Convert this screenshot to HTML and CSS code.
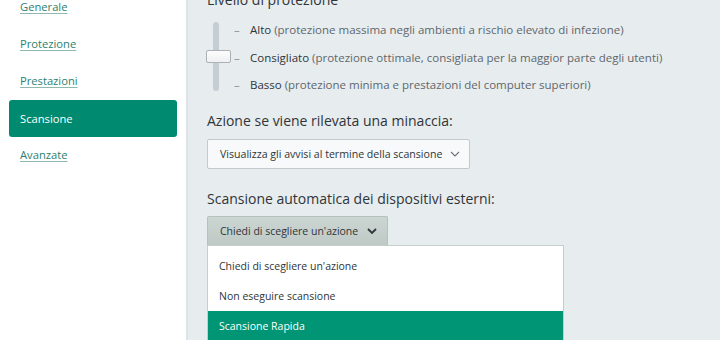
FILE: index.html
```html
<!DOCTYPE html>
<html lang="it">
<head>
<meta charset="UTF-8">
<title>Impostazioni - Scansione</title>
<link rel="stylesheet" href="styles.css">
</head>
<body>
<div class="window">
    <ul class="nav">
        <li><a class="nav_link" href="#">Generale</a></li>
        <li><a class="nav_link" href="#">Protezione</a></li>
        <li><a class="nav_link" href="#">Prestazioni</a></li>
        <li class="active"><span class="nav_link">Scansione</span></li>
        <li><a class="nav_link" href="#">Avanzate</a></li>
    </ul>

    <div class="content">
        <h2 class="section_title first">Livello di protezione</h2>
        <div class="level">
            <div class="slider">
                <div class="track"></div>
                <div class="thumb"></div>
            </div>
            <ul class="levels">
                <li><span class="tick">–</span><b>Alto</b> (protezione massima negli ambienti a rischio elevato di infezione)</li>
                <li><span class="tick">–</span><b>Consigliato</b> (protezione ottimale, consigliata per la maggior parte degli utenti)</li>
                <li><span class="tick">–</span><b>Basso</b> (protezione minima e prestazioni del computer superiori)</li>
            </ul>
        </div>

        <h2 class="section_title">Azione se viene rilevata una minaccia:</h2>
        <div class="select wide">
            <span>Visualizza gli avvisi al termine della scansione</span>
            <svg class="chevron" width="10" height="6" viewBox="0 0 10 6"><path d="M1 1l4 4 4-4" fill="none" stroke="#6d7478" stroke-width="1.1"/></svg>
        </div>

        <h2 class="section_title">Scansione automatica dei dispositivi esterni:</h2>
        <div class="dropdown">
            <div class="select open">
                <span>Chiedi di scegliere un'azione</span>
                <svg class="chevron" width="10" height="6" viewBox="0 0 10 6"><path d="M1 1l4 4 4-4" fill="none" stroke="#2f3538" stroke-width="1.8"/></svg>
            </div>
            <ul class="options">
                <li>Chiedi di scegliere un'azione</li>
                <li>Non eseguire scansione</li>
                <li class="selected">Scansione Rapida</li>
            </ul>
        </div>
    </div>
</div>
</body>
</html>
```

FILE: styles.css
```css
* {
    box-sizing: border-box;
}
body {
    margin: 0;
    font-family: "Open Sans", "Noto Sans", sans-serif;
    color: #2f3538;
    background: #e7ecef;
}
.window {
    display: flex;
    height: 340px;
    overflow: hidden;
}

.nav {
    list-style: none;
    margin: 0;
    padding: 0 9px;
    width: 188px;
    flex: none;
    background: #fff;
    border-right: 2px solid #dde3e6;
    margin-top: -12px;
}
.nav li {
    height: 37px;
    padding-left: 11px;
    display: flex;
    align-items: center;
    font-size: 11.2px;
}
.nav_link {
    color: #2b7f6f;
    text-decoration: underline;
    text-decoration-color: #8fb9b0;
    text-underline-offset: 2px;
}
.nav li.active {
    background: #008b70;
    border-radius: 3px;
    margin-top: 1px;
    margin-bottom: -1px;
}
.nav li.active .nav_link {
    color: #fff;
    text-decoration: none;
}

.content {
    flex: 1;
    padding-left: 19px;
    margin-top: -10px;
}
.section_title {
    font-size: 14px;
    font-weight: normal;
    margin: 0 0 9px;
    color: #2f3538;
}
.section_title.first {
    margin-bottom: 7px;
}

.level {
    display: flex;
    margin-bottom: 12px;
}
.slider {
    position: relative;
    width: 24px;
    height: 69px;
    margin-top: 6px;
    flex: none;
}
.track {
    width: 6px;
    height: 100%;
    margin-left: 6px;
    background: #c4ced4;
    border-radius: 3px;
}
.thumb {
    position: absolute;
    left: -1px;
    top: 28px;
    width: 25px;
    height: 13px;
    background: linear-gradient(#fdfdfd, #eef0f1);
    border: 1px solid #a9b1b5;
    border-radius: 2px;
}
.levels {
    list-style: none;
    margin: 0;
    padding: 0 0 0 3px;
}
.levels li {
    height: 27.5px;
    display: flex;
    align-items: center;
    font-size: 11.5px;
    color: #5f676b;
    white-space: pre;
}
.levels b {
    font-weight: normal;
    color: #2f3538;
}
.tick {
    color: #8a9296;
    width: 16px;
}

.select {
    display: flex;
    align-items: center;
    justify-content: space-between;
    height: 30px;
    padding: 0 9px 0 12px;
    font-size: 10.6px;
    white-space: nowrap;
    background: #f8f9fa;
    border: 1px solid #c3c9cc;
    border-radius: 2px;
    margin-bottom: 20px;
}
.select.wide {
    width: 263px;
}
.dropdown {
    position: relative;
    margin-top: -1px;
}
.select.open {
    width: 181px;
    height: 29px;
    margin-bottom: 0;
    padding-right: 10px;
    font-size: 10.5px;
    background: linear-gradient(#cbd5d2, #bfcac6);
    border-color: #b6c1bd;
    border-bottom: none;
    border-radius: 2px 2px 0 0;
}
.options {
    list-style: none;
    margin: 0;
    padding: 5px 0 0;
    width: 357px;
    background: #fff;
    border: 1px solid #c2cfca;
    border-bottom: none;
}
.options li {
    height: 30px;
    padding-left: 11px;
    display: flex;
    align-items: center;
    font-size: 10.5px;
}
.options li.selected {
    background: #009574;
    color: #fff;
}
```
